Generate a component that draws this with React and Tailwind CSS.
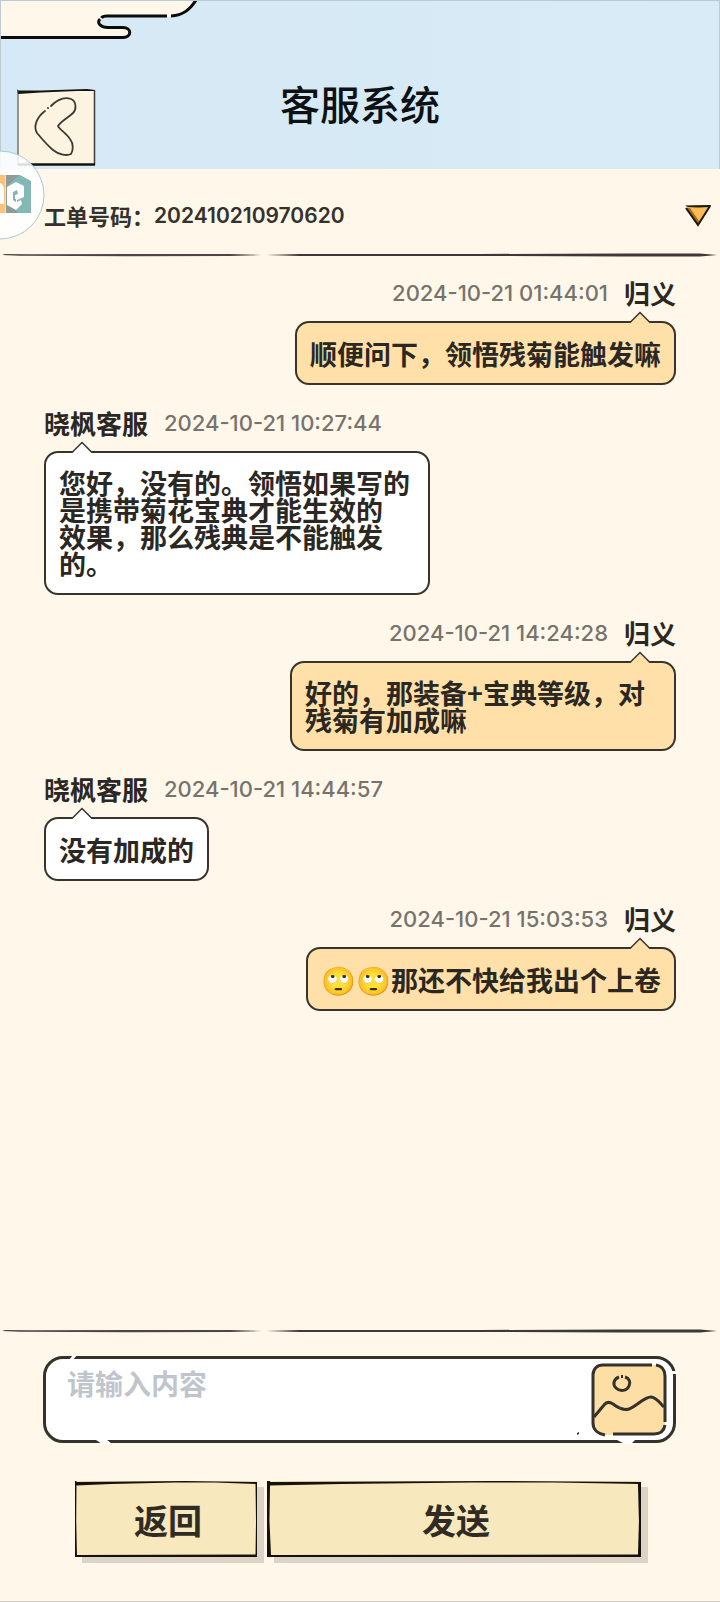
import { useState } from 'react';
import clsx from 'clsx';

const TICKETS = ['202410210970620'];

const MESSAGES = [
  { id: 1, mine: true, name: '归义', time: '2024-10-21 01:44:01', text: '顺便问下，领悟残菊能触发嘛' },
  {
    id: 2,
    name: '晓枫客服',
    time: '2024-10-21 10:27:44',
    text: '您好，没有的。领悟如果写的\n是携带菊花宝典才能生效的\n效果，那么残典是不能触发\n的。',
  },
  { id: 3, mine: true, name: '归义', time: '2024-10-21 14:24:28', text: '好的，那装备+宝典等级，对\n残菊有加成嘛' },
  { id: 4, name: '晓枫客服', time: '2024-10-21 14:44:57', text: '没有加成的' },
  { id: 5, mine: true, name: '归义', time: '2024-10-21 15:03:53', emoji: '🙄🙄', text: '那还不快给我出个上卷' },
];

function Cloud() {
  return (
    <svg className="absolute left-0 top-0" width="200" height="42" viewBox="0 0 200 42" fill="none" aria-hidden="true">
      <path d="M0 0H195C189 10 182 16 170 16H106C94 17 94 27 106 27.5H122C131 28 131 37 122 37.5H0Z" fill="#fff7ea" />
      <path d="M195 -1C189 9 182 14.500 170 15M166 15H106C102 15 101 16 100.500 17M99 18C95 22 100 26.500 107 26.500H122C131 27 131 36 122 36.500H0" stroke="#0b0b0b" strokeWidth="3" />
    </svg>
  );
}

function BackIcon() {
  return (
    <svg width="80" height="78" viewBox="0 0 80 78" fill="none" aria-hidden="true">
      <path d="M1 2L78 1V76H1Z" fill="#fcf4e0" />
      <path d="M0 0L1 1.500L24 1.500L70 0L78 1V2L60 2L24 3.500L1 5Z" fill="#14140f" />
      <path d="M1 1V76" stroke="#3c3c36" />
      <path d="M77.500 1V76" stroke="#3c3c36" strokeWidth="1.500" />
      <path d="M1 75.500H78" stroke="#14140f" strokeWidth="2.500" />
      <path
        d="M34 17C41 10 48 8 54 10C59 12 60 20 56 24C52 28 44 32 41 37C42 40 49 44 53 50C57 55 56 62 54 65C50 67 42 66 36 61C30 56 25 50 20 44C16 37 20 28 28 22"
        stroke="#3a3a35"
        strokeWidth="1.800"
        strokeLinecap="round"
      />
      <circle cx="31" cy="19" r="1" fill="#3a3a35" />
    </svg>
  );
}

function FloatingBadge() {
  return (
    <svg width="45" height="90" viewBox="0 0 45 90" fill="none" aria-hidden="true">
      <circle cx="0" cy="45" r="44" fill="#fff" fillOpacity="0.85" stroke="#a3cccb" />
      <path d="M0 25H5.500V63H0Z" fill="#f9c27c" />
      <path d="M0 33C3 34 4 37 4 40V54H0Z" fill="#fff" />
      <path d="M6 25H20L31 31V63H6Z" fill="#84b8b5" />
      <path d="M6 25H19L14 30L7 36V52L14 57L18 63H6Z" fill="#8b9d96" />
      <path d="M16 32L24 36V47L17 50V52L21 50L22 54L16 60L7 55V37Z" fill="#fff" />
      <path d="M17 40L13 42V50L16 52V49H15V45L18 44Z" fill="#84b3b0" />
    </svg>
  );
}

function BrushLine() {
  return (
    <svg className="block h-[6px] w-full" viewBox="0 0 720 6" preserveAspectRatio="none" aria-hidden="true">
      <path d="M2 3L5 2L30 2.200L130 2L230 2L262 3L230 4L130 4.200L20 3.800Z" fill="#4a4640" />
      <path d="M266 3L300 2L480 2L620 1.400L700 1.600L717 3L700 4.600L620 4.400L480 4L300 4Z" fill="#3d3933" />
    </svg>
  );
}

function Bubble({ mine, emoji, text }) {
  return (
    <div
      className={clsx(
        'relative flex min-h-16 max-w-full items-center whitespace-pre-line rounded-[14px] border-2 border-[#38332b] px-[13px] py-4 text-[27px] leading-[27px] font-bold text-[#2b2722]',
        mine ? 'bg-[#ffe0a8]' : 'bg-white',
        text.includes('\n') && 'w-[386px]'
      )}
    >
      <svg
        className={clsx('absolute -top-[12px]', mine ? 'right-[23px]' : 'left-[25px]')}
        width="22"
        height="14"
        viewBox="0 0 22 14"
        aria-hidden="true"
      >
        <path d="M1 12L11 2L21 12V14H1Z" fill={mine ? '#ffe0a8' : '#fff'} />
        <path d="M1 11.500L11 1.500L21 11.500" fill="none" stroke="#38332b" strokeWidth="1.500" />
      </svg>
      {emoji && <span className="text-[28px]">{emoji}</span>}
      <p>{text}</p>
    </div>
  );
}

function Message({ mine, name, time, emoji, text }) {
  return (
    <li className={clsx('flex flex-col gap-[14px]', mine ? 'items-end' : 'items-start')}>
      <div className={clsx('flex items-center gap-4', mine && 'flex-row-reverse')}>
        <span className="text-[26px] leading-[28px] font-bold text-[#2b2722]">{name}</span>
        <time className="font-[Inter] text-[22px] leading-[28px] font-medium text-[#77736c]">{time}</time>
      </div>
      <Bubble mine={mine} emoji={emoji} text={text} />
    </li>
  );
}

function SketchButton({ children }) {
  return (
    <button type="button" className="relative h-[76px] bg-[#f7e8bd] pl-1 text-[34px] font-bold text-[#302c25] shadow-[7px_6px_0_#dcd3c6]">
      <svg className="absolute inset-0 h-full w-full" viewBox="0 0 182 76" preserveAspectRatio="none" aria-hidden="true">
        <path d="M0 0L1 1L110 0L182 1V3L140 1.500L100 1.500L36 3L1 4.500Z" fill="#14120c" />
        <path d="M0 0H1.500L1.200 40L2 76H0Z" fill="#14120c" />
        <path d="M180.500 2H182V76H180.500L181 40Z" fill="#14120c" />
        <path d="M0 74.500L2 74L181 73.500L182 76H0Z" fill="#14120c" />
      </svg>
      <span className="relative">{children}</span>
    </button>
  );
}

function PictureIcon() {
  return (
    <svg width="76" height="74" viewBox="0 0 76 74" fill="none" aria-hidden="true">
      <rect x="2" y="2" width="72" height="70" rx="11" fill="#fddfa6" />
      <path d="M61 2H12C6 2 2 6 2 12V60C2 67 7 71 14 72" stroke="#35312b" strokeWidth="3" />
      <path d="M65 2C71 3 74 7 74 13V59M74 62C73 68 69 71 63 71H22" stroke="#35312b" strokeWidth="3" />
      <path d="M28 14C23 16 21 21 25 25C29 29 36 28 38 23C40 19 38 15 34 14M30 13.500H32" stroke="#35312b" strokeWidth="3" />
      <path d="M3 54L13 42C16 38 19 39 22 41C26 44 32 48 38 46C46 43 53 34 60 34C65 34 69 40 73 44" stroke="#35312b" strokeWidth="3" />
    </svg>
  );
}

export default function App() {
  const [ticket, setTicket] = useState(TICKETS[0]);
  const [draft, setDraft] = useState('');

  return (
    <div className="relative flex min-h-screen flex-col overflow-hidden border-b border-[#cfcbc0] bg-[#fff7ea] font-['Noto_Sans_CJK_SC',sans-serif]">
      <header className="relative flex h-[169px] items-center justify-center border-x border-t border-[#bccbd1] bg-linear-to-r from-[#d6e9f6] via-[#d6eaf5] to-[#d9ebf6] pt-9">
        <Cloud />
        <button type="button" aria-label="返回上一页" className="absolute bottom-[2px] left-4">
          <BackIcon />
        </button>
        <h1 className="text-[40px] leading-[48px] font-medium text-[#0d1114]">客服系统</h1>
      </header>
      <div className="absolute left-0 top-[150px]">
        <FloatingBadge />
      </div>

      <div className="relative flex h-[83px] items-center pl-11 text-[22px] leading-[30px] font-bold text-[#35312b]">
        <label htmlFor="ticket" className="pt-2">工单号码：</label>
        <select
          id="ticket"
          value={ticket}
          onChange={(e) => setTicket(e.target.value)}
          className="grow appearance-none bg-transparent pt-[10px] font-[Inter] text-[21px] font-semibold outline-none"
        >
          {TICKETS.map((t) => (
            <option key={t}>{t}</option>
          ))}
        </select>
        <svg className="pointer-events-none absolute right-2 top-[35px]" width="28" height="24" viewBox="0 0 28 24" aria-hidden="true">
          <path d="M2 2L26 1L14 22Z" fill="#f9bb52" />
          <path d="M2 4L6 4L15 17L14 22Z" fill="#a86a1c" />
          <path d="M1 1.500L27 1L26 3L14 3.500L4 3Z" fill="#1c1710" />
          <path d="M26 2L14 21L2 4" fill="none" stroke="#1c1710" strokeWidth="2" />
        </svg>
      </div>
      <BrushLine />

      <ul className="flex grow flex-col gap-6 px-11 pt-[21px]">
        {MESSAGES.map((m) => (
          <Message key={m.id} mine={m.mine} name={m.name} time={m.time} emoji={m.emoji} text={m.text} />
        ))}
      </ul>

      <BrushLine />
      <form className="pb-11 pt-[22px]" onSubmit={(e) => e.preventDefault()}>
        <div className="relative mr-11 ml-[43px] flex h-[87px] rounded-[20px] border-3 border-[#35312b] bg-white">
          <textarea
            aria-label="请输入内容"
            placeholder="请输入内容"
            value={draft}
            onChange={(e) => setDraft(e.target.value)}
            className="grow resize-none bg-transparent pt-[6px] pl-[21px] text-[28px] leading-[36px] font-bold text-[#2b2722] outline-none placeholder:text-[#c0c5cd]"
          />
          <button type="button" aria-label="图片" className="mr-[6px] self-center">
            <PictureIcon />
          </button>
          {/* worn spots in the ink outline */}
          <svg className="pointer-events-none absolute -top-1 left-5" width="14" height="6" viewBox="0 0 14 6" aria-hidden="true">
            <path d="M3 5L7 0L11 0L7 5Z" fill="#fff" />
          </svg>
          <svg className="pointer-events-none absolute -bottom-1 left-12" width="20" height="6" viewBox="0 0 20 6" aria-hidden="true">
            <path d="M2 2L12 1L18 6H8Z" fill="#fff" />
          </svg>
          <svg className="pointer-events-none absolute -bottom-1 right-9" width="20" height="6" viewBox="0 0 20 6" aria-hidden="true">
            <path d="M0 2H18L14 6H8Z" fill="#fff" />
          </svg>
          <svg className="pointer-events-none absolute -right-1 top-[9px]" width="8" height="8" viewBox="0 0 8 8" aria-hidden="true">
            <path d="M0 3H8V6H0Z" fill="#fff" />
          </svg>
          <svg className="pointer-events-none absolute bottom-1 right-[92px]" width="5" height="4" viewBox="0 0 5 4" aria-hidden="true">
            <path d="M1 1L3 0V2L1 3Z" fill="#35312b" />
          </svg>
        </div>
        <div className="mt-[38px] grid grid-cols-[182fr_374fr] gap-[10px] pr-[79px] pl-[75px]">
          <SketchButton>返回</SketchButton>
          <SketchButton>发送</SketchButton>
        </div>
      </form>
    </div>
  );
}
